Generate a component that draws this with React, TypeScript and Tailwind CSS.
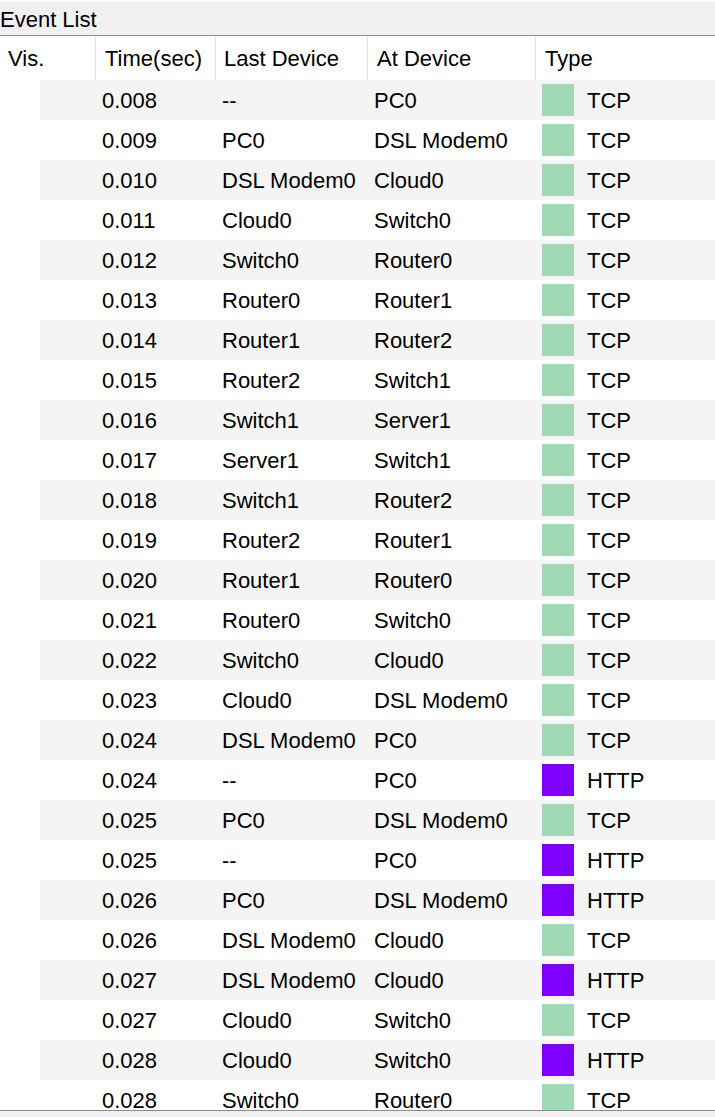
import React from "react";

type Ev = { t: string; last: string; at: string; type: "TCP" | "HTTP" };

const events: Ev[] = [
  { t: "0.008", last: "--", at: "PC0", type: "TCP" },
  { t: "0.009", last: "PC0", at: "DSL Modem0", type: "TCP" },
  { t: "0.010", last: "DSL Modem0", at: "Cloud0", type: "TCP" },
  { t: "0.011", last: "Cloud0", at: "Switch0", type: "TCP" },
  { t: "0.012", last: "Switch0", at: "Router0", type: "TCP" },
  { t: "0.013", last: "Router0", at: "Router1", type: "TCP" },
  { t: "0.014", last: "Router1", at: "Router2", type: "TCP" },
  { t: "0.015", last: "Router2", at: "Switch1", type: "TCP" },
  { t: "0.016", last: "Switch1", at: "Server1", type: "TCP" },
  { t: "0.017", last: "Server1", at: "Switch1", type: "TCP" },
  { t: "0.018", last: "Switch1", at: "Router2", type: "TCP" },
  { t: "0.019", last: "Router2", at: "Router1", type: "TCP" },
  { t: "0.020", last: "Router1", at: "Router0", type: "TCP" },
  { t: "0.021", last: "Router0", at: "Switch0", type: "TCP" },
  { t: "0.022", last: "Switch0", at: "Cloud0", type: "TCP" },
  { t: "0.023", last: "Cloud0", at: "DSL Modem0", type: "TCP" },
  { t: "0.024", last: "DSL Modem0", at: "PC0", type: "TCP" },
  { t: "0.024", last: "--", at: "PC0", type: "HTTP" },
  { t: "0.025", last: "PC0", at: "DSL Modem0", type: "TCP" },
  { t: "0.025", last: "--", at: "PC0", type: "HTTP" },
  { t: "0.026", last: "PC0", at: "DSL Modem0", type: "HTTP" },
  { t: "0.026", last: "DSL Modem0", at: "Cloud0", type: "TCP" },
  { t: "0.027", last: "DSL Modem0", at: "Cloud0", type: "HTTP" },
  { t: "0.027", last: "Cloud0", at: "Switch0", type: "TCP" },
  { t: "0.028", last: "Cloud0", at: "Switch0", type: "HTTP" },
  { t: "0.028", last: "Switch0", at: "Router0", type: "TCP" },
];

export default function App() {
  return (
    <div
      className="w-[715px] h-[1117px] bg-[#f0f0f0] flex flex-col overflow-hidden text-black text-[22px] leading-none"
      style={{ fontFamily: '"Liberation Sans", Arial, sans-serif' }}
    >
      {/* title strip */}
      <div className="h-[2px] bg-[#f9f9f9]" />
      <div className="h-[33px] flex items-center pt-[2px]">
        <span>Event List</span>
      </div>
      <div className="h-[1px] bg-[#8c8c8c]" />

      {/* table */}
      <div className="h-[1074px] bg-white flex flex-col overflow-hidden">
        <div className="h-[44px] shrink-0 flex items-stretch pt-[1px]">
          <div className="w-[95px] flex items-center pl-[8px] pt-[1px]">Vis.</div>
          <div className="w-[120px] flex items-center pl-[9px] pt-[1px] border-l border-[#e3e3e3]">Time(sec)</div>
          <div className="w-[152px] flex items-center pl-[8px] pt-[1px] border-l border-[#e3e3e3]">Last Device</div>
          <div className="w-[168px] flex items-center pl-[9px] pt-[1px] border-l border-[#e3e3e3]">At Device</div>
          <div className="flex-1 flex items-center pl-[9px] pt-[1px] border-l border-[#e3e3e3]">Type</div>
        </div>

        {events.map((e, i) => (
          <div key={i} className="h-[40px] shrink-0 flex">
            <div className="w-[40px]" />
            <div className={`flex-1 flex items-center ${i % 2 === 0 ? "bg-[#f4f4f4]" : "bg-white"}`}>
              <div className="w-[55px]" />
              <div className="w-[120px] pl-[7px] pt-[2px]">{e.t}</div>
              <div className="w-[152px] pl-[7px] pt-[2px]">{e.last}</div>
              <div className="w-[168px] pl-[7px] pt-[2px]">{e.at}</div>
              <div className="flex-1 flex items-center pl-[7px] gap-[13px]">
                <span
                  className={`w-[32px] h-[32px] ${e.type === "TCP" ? "bg-[#a1d9b4]" : "bg-[#8000ff]"}`}
                />
                <span className="pt-[2px]">{e.type}</span>
              </div>
            </div>
          </div>
        ))}
      </div>
      <div className="h-[1px] bg-[#8c8c8c]" />
    </div>
  );
}
